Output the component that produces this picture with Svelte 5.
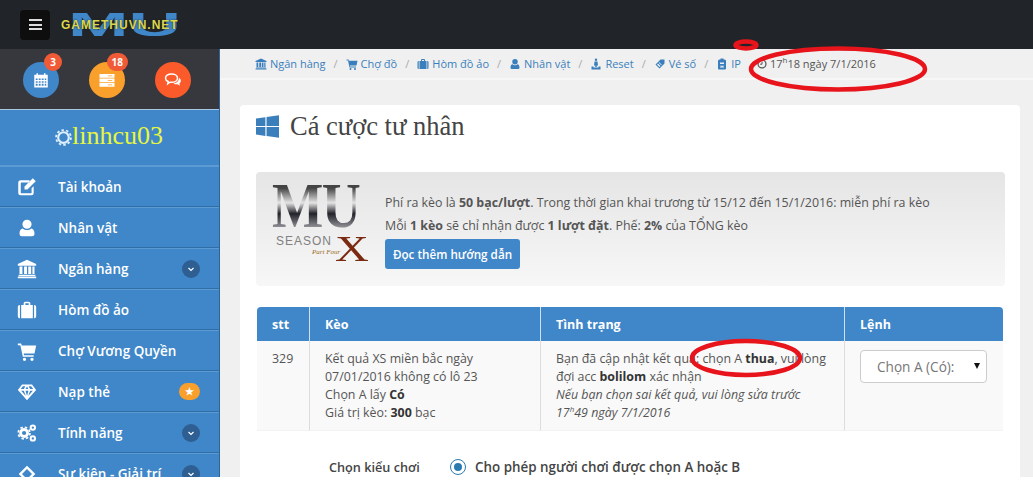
<script lang="ts">
	const icons: Record<string, string> = {
		edit: 'M4 4h11v2.500H5.500a1 1 0 0 0-1 1v11a1 1 0 0 0 1 1h11a1 1 0 0 0 1-1v-5l2.500-2.500V19a3 3 0 0 1-3 3H4.500a3 3 0 0 1-3-3V7a3 3 0 0 1 3-3zM19 1.500l3.500 3.500L12.500 15H9v-3.500z',
		user: 'M12 2a5.500 5.500 0 1 1 0 11 5.500 5.500 0 0 1 0-11zM7 12.500c1.300 1.300 3 2 5 2s3.700-.7 5-2c2.500.3 4 2.500 4 6.500 0 2-1.300 3-3 3H6c-1.700 0-3-1-3-3 0-4 1.500-6.200 4-6.500z',
		bank: 'M12 1l11 5v2H1V6zM3 9h3.500v9H3zM8.500 9H12v9H8.500zM13.500 9H17v9h-3.500zM18.500 9H21v9h-2.500zM2 19h20v1.500H2zM1 21h22v2H1z',
		case: 'M8 6V4a2 2 0 0 1 2-2h4a2 2 0 0 1 2 2v2h-2V4h-4v2zM5 6h14v16H5zM3.500 6v16C2 22 1 21 1 19.500v-11C1 7 2 6 3.500 6zM20.500 6C22 6 23 7 23 8.500v11c0 1.500-1 2.500-2.500 2.500z',
		cart: 'M1 3h4l.7 2.500H23l-2 9.500H8l.4 2H20v2H7L4 5H1zM9 20a2 2 0 1 1 0 4 2 2 0 0 1 0-4zM18 20a2 2 0 1 1 0 4 2 2 0 0 1 0-4z',
		reset: 'M12 1a2.500 2.500 0 1 1 0 5 2.500 2.500 0 0 1 0-5zM9 7h6l1 8h-2.500v3h-3v-3H8zM3 17h4v2h10v-2h4v6H3z',
		tag: 'M13 3h8v8L11 21l-8-8zM6 13l5 5 2-2-5-5zM9.500 9.500l5 5 1-1-5-5z',
		ip: 'M9 1h6v2h2c2 0 3 1.500 3 3v15a2 2 0 0 1-2 2H6a2 2 0 0 1-2-2V6c0-1.500 1-3 3-3h2zM8 9v3h8V9zm1 6v5h2v-2h2v2h2v-5h-2v1.500h-2V15z',
		gem: 'M6 3h12l5 6.500L12 22 1 9.500zM7 5L4.500 8.500h3.800L10 5zm7 0l1.700 3.500h3.800L17 5zM5 10.500l5.500 6.300-2.300-6.300zm5.200 0L12 16.500l1.800-6zm5.600 0l-2.300 6.300 5.500-6.300zM12 5.300l-1.700 3.200h3.400z',
		event: 'M12 2l5 5-2 2-3-3-6 6 3 3-2 2-5-5zM12 22l-5-5 2-2 3 3 6-6-3-3 2-2 5 5z'
	};

	const menu = [
		{ label: 'Tài khoản', icon: 'edit', extra: '' },
		{ label: 'Nhân vật', icon: 'user', extra: '' },
		{ label: 'Ngân hàng', icon: 'bank', extra: 'more' },
		{ label: 'Hòm đồ ảo', icon: 'case', extra: '' },
		{ label: 'Chợ Vương Quyền', icon: 'cart', extra: '' },
		{ label: 'Nạp thẻ', icon: 'gem', extra: 'star' },
		{ label: 'Tính năng', icon: 'cogs', extra: 'more' },
		{ label: 'Sự kiện - Giải trí', icon: 'event', extra: 'more' }
	];

	const crumbs = [
		{ label: 'Ngân hàng', icon: 'bank' },
		{ label: 'Chợ đồ', icon: 'cart' },
		{ label: 'Hòm đồ ảo', icon: 'case' },
		{ label: 'Nhân vật', icon: 'user' },
		{ label: 'Reset', icon: 'reset' },
		{ label: 'Vé số', icon: 'tag' },
		{ label: 'IP', icon: 'ip' }
	];
</script>

{#snippet cogs()}
	<svg class="m-icon" viewBox="0 0 24 24" aria-hidden="true">
		<circle cx="8.500" cy="12" r="4.200" fill="none" stroke="#fff" stroke-width="3.400" />
		<circle cx="8.500" cy="12" r="7" fill="none" stroke="#fff" stroke-width="2" stroke-dasharray="3 2.500" />
		<circle cx="19" cy="5.500" r="2.600" fill="none" stroke="#fff" stroke-width="2.400" />
		<circle cx="19" cy="18.500" r="2.600" fill="none" stroke="#fff" stroke-width="2.400" />
	</svg>
{/snippet}

<div class="page">
	<header class="topbar">
		<button class="burger" aria-label="Menu"><span></span><span></span><span></span></button>
		<div class="logo">
			<span class="logo-mu">MU</span>
			<span class="logo-name">GAMETHUVN.NET</span>
		</div>
	</header>

	<div class="body">
		<aside class="sidebar">
			<div class="quick">
				<div class="round blue">
					<svg viewBox="0 0 24 24" aria-hidden="true"><path fill="#fff" fill-rule="evenodd" d="M3 5h3V3h2v2h8V3h2v2h3v17H3zM5 10v2h2.500v-2zm4 0v2h2.500v-2zm4 0v2h2.500v-2zm4 0v2h2v-2zM5 13.500v2h2.500v-2zm4 0v2h2.500v-2zm4 0v2h2.500v-2zm4 0v2h2v-2zM5 17v2.500h2.500V17zm4 0v2.500h2.500V17zm4 0v2.500h2.500V17zm4 0v2.500h2V17z" /></svg>
					<span class="badge">3</span>
				</div>
				<div class="round amber">
					<svg viewBox="0 0 24 24" aria-hidden="true"><path fill="#fff" fill-rule="evenodd" d="M2 4h20v5H2zM2 10h20v5H2zM2 16h20v5H2zM13 6v1h6V6zm0 6v1h6v-1zm0 6v1h6v-1z" /></svg>
					<span class="badge">18</span>
				</div>
				<div class="round red">
					<svg viewBox="0 0 24 24" aria-hidden="true"><path fill="none" stroke="#fff" stroke-width="2" d="M10 4c4.500 0 8 2.400 8 5.500S14.500 15 10 15H8l-3 2 .6-3C3.400 13 2 11.400 2 9.500 2 6.400 5.500 4 10 4z" /><path fill="#fff" d="M20 9c1.500 1 2.500 2.500 2.500 4 0 1.500-.8 2.800-2 3.700l.7 3-3.200-2c-2 .3-4-.2-5.500-1.200 3.500 0 7.500-2.500 7.500-7.500z" /></svg>
				</div>
			</div>

			<div class="member">
				<svg class="gear" viewBox="0 0 24 24" aria-hidden="true">
					<circle cx="12" cy="12" r="7.500" fill="none" stroke="#dff0ff" stroke-width="3" />
					<circle cx="12" cy="12" r="10.500" fill="none" stroke="#dff0ff" stroke-width="2.500" stroke-dasharray="3.500 3.100" />
				</svg>
				<span>linhcu03</span>
			</div>

			<nav class="menu">
				{#each menu as item}
					<div class="menu-row">
						<span class="m-icon-box">
							{#if item.icon === 'cogs'}
								{@render cogs()}
							{:else}
								<svg class="m-icon" viewBox="0 0 24 24" aria-hidden="true"><path fill="#fff" fill-rule="evenodd" d={icons[item.icon]} /></svg>
							{/if}
						</span>
						<span class="m-label">{item.label}</span>
						{#if item.extra === 'more'}
							<span class="more">
								<svg viewBox="0 0 10 10" aria-hidden="true"><path d="M2.500 4l2.500 2.500L7.500 4" fill="none" stroke="#fff" stroke-width="1.200" /></svg>
							</span>
						{:else if item.extra === 'star'}
							<span class="star">★</span>
						{/if}
					</div>
				{/each}
			</nav>
		</aside>

		<main class="main">
			<div class="crumbs">
				{#each crumbs as crumb, i}
					<span class="crumb">
						<svg viewBox="0 0 24 24" aria-hidden="true"><path fill="#3a7fbc" fill-rule="evenodd" d={icons[crumb.icon]} /></svg>
						{crumb.label}
					</span>
					{#if i < crumbs.length - 1}<span class="sep">/</span>{/if}
				{/each}
				<span class="time">
					<svg viewBox="0 0 24 24" aria-hidden="true"><circle cx="12" cy="12" r="9.500" fill="none" stroke="#555" stroke-width="3" /><path d="M12 6v6.500H7.500" fill="none" stroke="#555" stroke-width="2.400" /></svg>
					<span>17<sup>h</sup>18 ngày 7/1/2016</span>
				</span>
			</div>

			<section class="card">
				<h1 class="title">
					<svg viewBox="0 0 24 24" aria-hidden="true"><path fill="#3a7fbc" d="M0 3.600l9.800-1.300v9.200H0zM11 2.100L24 .3v11.200H11zM0 12.600h9.800v9.200L0 20.400zM11 12.600h13v11.100l-13-1.800z" /></svg>
					Cá cược tư nhân
				</h1>

				<div class="promo">
					<div class="promo-logo">
						<span class="promo-mu">MU</span>
						<span class="promo-season">SEASON</span>
						<span class="promo-x">X</span>
						<span class="promo-part">Part Four</span>
					</div>
					<div class="promo-text">
						<p>Phí ra kèo là <b>50 bạc/lượt</b>. Trong thời gian khai trương từ 15/12 đến 15/1/2016: miễn phí ra kèo</p>
						<p>Mỗi <b>1 kèo</b> sẽ chỉ nhận được <b>1 lượt đặt</b>. Phế: <b>2%</b> của TỔNG kèo</p>
						<button class="guide">Đọc thêm hướng dẫn</button>
					</div>
				</div>

				<table class="bets">
					<thead>
						<tr>
							<th class="c-id">stt</th>
							<th class="c-bet">Kèo</th>
							<th class="c-state">Tình trạng</th>
							<th>Lệnh</th>
						</tr>
					</thead>
					<tbody>
						<tr>
							<td>329</td>
							<td>Kết quả XS miền bắc ngày<br />07/01/2016 không có lô 23<br />Chọn A lấy <b>Có</b><br />Giá trị kèo: <b>300</b> bạc</td>
							<td>Bạn đã cập nhật kết quả: chọn A <b>thua</b>, vui lòng đợi acc <b>bolilom</b> xác nhận<br /><i>Nếu bạn chọn sai kết quả, vui lòng sửa trước 17<sup>h</sup>49 ngày 7/1/2016</i></td>
							<td>
								<div class="select-box">Chọn A (Có):</div>
							</td>
						</tr>
					</tbody>
				</table>

				<div class="play-type">
					<span class="play-label">Chọn kiểu chơi</span>
					<span class="radio"></span>
					<span class="play-value">Cho phép người chơi được chọn A hoặc B</span>
				</div>
			</section>
		</main>
	</div>

	<!-- marks someone drew by hand on top of the screenshot -->
	<svg class="marks" viewBox="0 0 1033 477" aria-hidden="true">
		<ellipse cx="746" cy="45" rx="10.500" ry="3.500" />
		<ellipse cx="838" cy="69" rx="87" ry="20.500" />
		<ellipse cx="746" cy="358" rx="54" ry="17" />
	</svg>
</div>

<style>
	:global(body) {
		background: #fff;
	}

	.page {
		position: relative;
		width: 1033px;
		height: 477px;
		overflow: hidden;
		font-family: 'Open Sans', sans-serif;
		font-size: 12.4px;
		color: #555;
		background: #f0f0f0;
	}

	.topbar {
		display: flex;
		align-items: center;
		gap: 11px;
		height: 49px;
		padding-left: 20px;
		box-sizing: border-box;
		background: #212428;
	}

	.burger {
		display: flex;
		flex-direction: column;
		justify-content: center;
		align-items: center;
		gap: 2.500px;
		width: 30px;
		height: 30px;
		padding: 0;
		border: 0;
		border-radius: 4px;
		background: #0e0e0e;
	}

	.burger span {
		width: 13px;
		height: 2px;
		background: #ddd;
	}

	.logo {
		position: relative;
		width: 120px;
		height: 28px;
	}

	.logo-mu {
		position: absolute;
		left: 7px;
		top: -3px;
		font-family: 'Liberation Sans', sans-serif;
		font-size: 33px;
		line-height: 34px;
		font-weight: 700;
		color: #3f87c9;
		transform: scale(2.200, 1);
		transform-origin: left center;
	}

	.logo-name {
		position: absolute;
		left: 0;
		top: 6px;
		font-family: 'Liberation Sans', sans-serif;
		font-size: 12px;
		line-height: 16px;
		font-weight: 700;
		letter-spacing: 1px;
		white-space: nowrap;
		color: #dcd64a;
		text-shadow: 0 0 2px #222;
	}

	.body {
		display: flex;
		height: 428px;
	}

	.sidebar {
		flex: none;
		width: 220px;
		box-sizing: border-box;
		border-right: 1px solid #2c6496;
		background: #3f87c9;
	}

	.quick {
		display: flex;
		gap: 30px;
		height: 61px;
		padding: 13px 0 0 23px;
		box-sizing: border-box;
		border-bottom: 1px solid #a9c8e4;
		background: #36383d;
	}

	.round {
		position: relative;
		display: flex;
		align-items: center;
		justify-content: center;
		width: 36px;
		height: 36px;
		border-radius: 50%;
	}

	.round svg {
		width: 18px;
		height: 18px;
	}

	.blue {
		background: #3f87c9;
	}

	.amber {
		background: #f9a02c;
	}

	.red {
		background: #fb5a2a;
	}

	.badge {
		position: absolute;
		top: -9px;
		right: -3px;
		min-width: 18px;
		height: 18px;
		padding: 0 5px;
		box-sizing: border-box;
		border-radius: 9px;
		text-align: center;
		font-size: 10px;
		line-height: 18px;
		font-weight: 700;
		color: #fff;
		background: #f05a36;
	}

	.member {
		display: flex;
		align-items: center;
		justify-content: center;
		height: 56px;
		padding: 0 1px 4px 0;
		box-sizing: border-box;
		border-bottom: 1px solid #5c9ad4;
		font-family: 'Liberation Serif', serif;
		font-size: 26px;
		color: #e8f63e;
	}

	.gear {
		width: 17px;
		height: 17px;
		margin-top: 4px;
	}

	.menu-row {
		display: flex;
		align-items: center;
		height: 41px;
		padding-right: 19px;
		box-sizing: border-box;
		border-top: 1px solid #5c9ad4;
		border-bottom: 1px solid #2f6ea6;
		font-size: 13.5px;
		font-weight: 600;
		color: #fff;
	}

	.m-icon-box {
		display: flex;
		justify-content: center;
		width: 58px;
		padding-right: 4px;
		box-sizing: border-box;
	}

	.m-icon {
		width: 20px;
		height: 20px;
	}

	.m-label {
		flex: 1;
	}

	.more {
		display: flex;
		align-items: center;
		justify-content: center;
		width: 18px;
		height: 18px;
		border-radius: 50%;
		background: #2f5f92;
	}

	.more svg {
		width: 10px;
		height: 10px;
	}

	.star {
		width: 21px;
		height: 17px;
		border-radius: 9px;
		text-align: center;
		font-size: 10px;
		line-height: 17px;
		background: #f9a02c;
	}

	.main {
		flex: 1;
		min-width: 0;
	}

	.crumbs {
		display: flex;
		align-items: center;
		height: 29px;
		padding-left: 35px;
		border-bottom: 2px solid #f7f7f7;
		font-size: 11px;
		white-space: nowrap;
	}

	.crumb {
		display: flex;
		align-items: center;
		gap: 3px;
		color: #3a7fbc;
	}

	.crumb svg {
		width: 12px;
		height: 12px;
	}

	.sep {
		margin: 0 8px;
		color: #aaa;
	}

	.time {
		display: flex;
		align-items: center;
		gap: 3px;
		margin-left: 16px;
		color: #555;
	}

	.time svg {
		width: 10px;
		height: 10px;
	}

	.time sup {
		font-size: 8px;
		line-height: 0;
	}

	.card {
		margin: 25px 13px 0 20px;
		height: 400px;
		padding: 0 16px;
		border-radius: 4px;
		background: #fff;
	}

	.title {
		display: flex;
		align-items: center;
		gap: 11px;
		height: 43px;
		margin: 0;
		padding: 0 0 24px;
		box-sizing: content-box;
		font-family: 'Liberation Serif', serif;
		font-size: 26.500px;
		font-weight: 400;
		color: #444;
	}

	.title svg {
		width: 23px;
		height: 23px;
	}

	.promo {
		display: flex;
		gap: 14px;
		height: 114px;
		margin-right: -1px;
		padding: 0 0 0 14px;
		border-radius: 4px;
		background: linear-gradient(#e5e5e5, #f7f7f7);
	}

	.promo-logo {
		position: relative;
		flex: none;
		width: 101px;
		height: 114px;
	}

	.promo-mu {
		position: absolute;
		left: 2px;
		top: 2px;
		font-family: 'Liberation Serif', serif;
		font-size: 64px;
		line-height: 64px;
		font-weight: 700;
		letter-spacing: -2px;
		background: linear-gradient(#444 22%, #e4e4e4 45%, #22222a 62%, #8a8a90 82%);
		-webkit-background-clip: text;
		background-clip: text;
		color: transparent;
		transform: scaleX(0.85);
		transform-origin: left center;
	}

	.promo-season {
		position: absolute;
		left: 6px;
		top: 61px;
		font-family: 'Liberation Sans', sans-serif;
		font-size: 12px;
		line-height: 16px;
		letter-spacing: 1px;
		color: #808080;
	}

	.promo-x {
		position: absolute;
		left: 65px;
		top: 59px;
		font-family: 'Liberation Serif', serif;
		font-size: 36px;
		line-height: 36px;
		color: #7a2a10;
		transform: scaleX(1.300);
		transform-origin: left center;
	}

	.promo-part {
		position: absolute;
		left: 42px;
		top: 75px;
		font-family: 'Liberation Serif', serif;
		font-style: italic;
		font-size: 7px;
		line-height: 10px;
		color: #9a6a20;
	}

	.promo-text {
		padding-top: 22px;
	}

	.promo-text p {
		margin: 0 0 5px;
		line-height: 18px;
	}

	.guide {
		display: block;
		width: 135px;
		height: 30px;
		margin-top: -1px;
		padding: 0;
		border: 0;
		border-radius: 3px;
		font-family: inherit;
		font-size: 11.700px;
		font-weight: 600;
		color: #fff;
		background: #3f87c9;
	}

	.bets {
		width: 746px;
		margin: 21px 0 0 1px;
		border-collapse: separate;
		border-spacing: 0;
		table-layout: fixed;
	}

	.bets th {
		height: 34px;
		padding: 0 0 0 15px;
		border-left: 1px solid #cfe0f0;
		text-align: left;
		font-size: 12.500px;
		font-weight: 700;
		color: #fff;
		background: #3f87c9;
	}

	.bets th:first-child {
		border-left: 0;
		border-top-left-radius: 4px;
	}

	.bets th:last-child {
		border-top-right-radius: 4px;
	}

	.c-id {
		width: 37px;
	}

	.c-bet {
		width: 215px;
	}

	.c-state {
		width: 288px;
	}

	.bets td {
		height: 89px;
		padding: 9px 15px 8px;
		box-sizing: border-box;
		border-left: 1px solid #ddd;
		border-bottom: 1px solid #f3f3f3;
		vertical-align: top;
		line-height: 18px;
		background: #f9f9f9;
	}

	.bets td:first-child {
		border-left: 0;
	}

	.bets sup {
		font-size: 8px;
		line-height: 0;
	}

	.bets b {
		color: #333;
	}

	.select-box {
		position: relative;
		width: 127px;
		height: 33px;
		box-sizing: border-box;
		padding-left: 16px;
		border: 1px solid #ccc;
		border-radius: 4px;
		font-size: 13.600px;
		line-height: 31px;
		color: #777;
		background: #fff;
	}

	.select-box::after {
		content: '';
		position: absolute;
		right: 6px;
		top: 12px;
		border-left: 3.500px solid transparent;
		border-right: 3.500px solid transparent;
		border-top: 6px solid #111;
	}

	.play-type {
		display: flex;
		align-items: center;
		margin: 27px 0 0 73px;
		font-weight: 600;
		color: #444;
	}

	.play-label {
		width: 122px;
		font-size: 12.700px;
	}

	.play-value {
		font-size: 13.400px;
	}

	.radio {
		width: 8px;
		height: 8px;
		margin-right: 10px;
		border: 3px solid #fff;
		border-radius: 50%;
		outline: 1.500px solid #2a7ab0;
		background: #2a7ab0;
	}

	.marks {
		position: absolute;
		left: 0;
		top: 0;
		width: 1033px;
		height: 477px;
		pointer-events: none;
	}

	.marks ellipse {
		fill: none;
		stroke: #e8141c;
		stroke-width: 4.500;
	}
</style>
